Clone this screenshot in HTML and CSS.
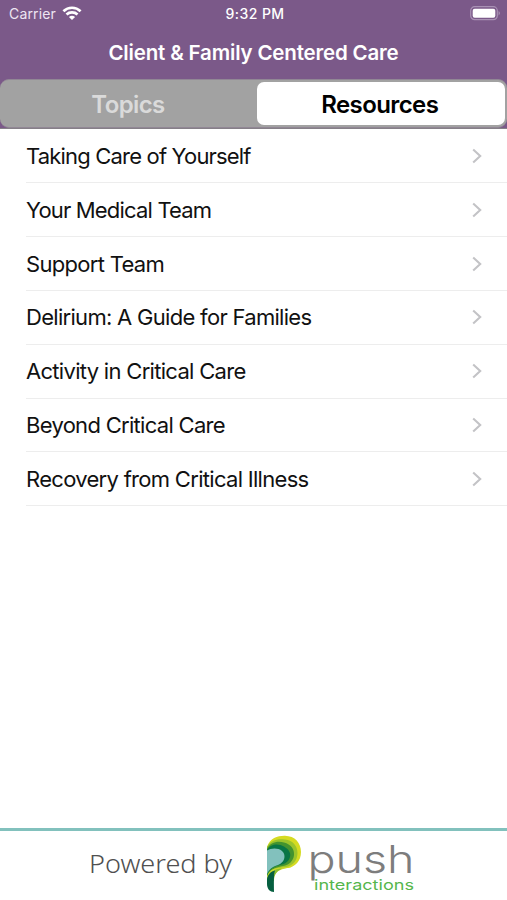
FILE: index.html
```html
<!DOCTYPE html>
<html lang="en">
<head>
<meta charset="utf-8">
<title>Client &amp; Family Centered Care</title>
<link rel="stylesheet" href="styles.css">
</head>
<body>
<div class="app">
  <header class="header">
    <div class="status">
      <div class="carrier"><span class="carrier-name">Carrier</span>
        <svg class="wifi" width="20" height="15" viewBox="0 0 20 15" fill="none" stroke="#fff" stroke-width="2.7"><path d="M1.4 5.2C6.3.6 13.7.6 18.6 5.2M4.5 8.5C7.5 5.7 12.5 5.7 15.5 8.5"/><path d="M10 14 6.9 10.9Q10 8.4 13.1 10.9Z" fill="#fff" stroke="none"/></svg>
      </div>
      <time class="time">9:32 PM</time>
      <svg class="battery" width="31" height="15" viewBox="0 0 31 15"><rect x=".7" y=".7" width="26.6" height="13" rx="4" fill="none" stroke="#a991b4" stroke-width="1.2"/><rect x="2.7" y="2.7" width="22.6" height="9" rx="2" fill="#fff"/><path d="M28.7 5q2 2.2 0 4.4z" fill="#b9a5c3"/></svg>
    </div>
    <h1 class="title">Client &amp; Family Centered Care</h1>
  </header>
  <nav class="tabs-wrap"><div class="tabs">
    <button class="tab"><span class="topics">Topics</span></button>
    <button class="tab active"><span class="resources">Resources</span></button>
  </div></nav>
  <ul class="list">
    <li class="row tight"><span>Taking Care of Yourself</span><svg class="chevron" viewBox="0 0 10 16"><path d="m1.2 1.6 7 6.4-7 6.4"/></svg></li>
    <li class="row tight"><span>Your Medical Team</span><svg class="chevron" viewBox="0 0 10 16"><path d="m1.2 1.6 7 6.4-7 6.4"/></svg></li>
    <li class="row"><span>Support Team</span><svg class="chevron" viewBox="0 0 10 16"><path d="m1.2 1.6 7 6.4-7 6.4"/></svg></li>
    <li class="row"><span>Delirium: A Guide for Families</span><svg class="chevron" viewBox="0 0 10 16"><path d="m1.2 1.6 7 6.4-7 6.4"/></svg></li>
    <li class="row"><span>Activity in Critical Care</span><svg class="chevron" viewBox="0 0 10 16"><path d="m1.2 1.6 7 6.4-7 6.4"/></svg></li>
    <li class="row"><span>Beyond Critical Care</span><svg class="chevron" viewBox="0 0 10 16"><path d="m1.2 1.6 7 6.4-7 6.4"/></svg></li>
    <li class="row"><span>Recovery from Critical Illness</span><svg class="chevron" viewBox="0 0 10 16"><path d="m1.2 1.6 7 6.4-7 6.4"/></svg></li>
  </ul>
  <footer class="footer">
    <svg class="brand" width="507" height="69" viewBox="0 831 507 69">
      <text class="powered" x="89" y="872.5" textLength="143" lengthAdjust="spacingAndGlyphs">Powered by</text>
      <path fill="#d5db22" d="M267 847C270 838 278 835.6 285 835.8C295 836 301 843 301 852C301 861 295 867 288 868C281 869 272 868 267 877Z"/>
      <path fill="#9bc42c" d="M267 847C271 839.5 278 838.5 285 839.5C293 840.5 297.5 846 297.5 853C297.5 861 292 866 286 867C278 868 270 870 267 877Z"/>
      <path fill="#43932f" d="M267 849C270 842 278 840.5 284 842.5C291 844.5 294.5 849 294 855C293.5 861 289 865 283 866C276 867 269 870 267 876Z"/>
      <path fill="#087545" d="M267 850C271 843 279 843.5 284 846.5C289 849.5 291 853 290 857C288.5 863 283 864.5 278 865.5C273 866.5 269 870 267 875Z"/>
      <path fill="#82c1bd" d="M267 850.5C271 848 278 847.5 282 851C287 855.5 284 863 278 865C272 866.5 269 870 267 874Z"/>
      <path fill="#c9d72b" d="M267 878C269 868 276 868 282 867.5L291 867C282 869 276 870 274 877L273 884C268 882 267 881 267 878Z"/>
      <path fill="#8bbd31" d="M267 880C269 871 275 869 282 868.4C277 871 274 874 274 881Z"/>
      <path fill="#065f40" d="M267 879C268 874 271 871.5 275 870.5C273.5 875 274 882 274 892C270 892 267 889 267 884Z"/>
      <text class="push" x="307.5" y="872.5" textLength="107" lengthAdjust="spacingAndGlyphs">push</text>
      <text class="interactions" x="314" y="889.8" textLength="100" lengthAdjust="spacingAndGlyphs">interactions</text>
    </svg>
  </footer>
</div>
</body>
</html>
```

FILE: styles.css
```css
* { box-sizing: border-box; }
body { margin: 0; font-family: Inter, "Liberation Sans", sans-serif; background: #fff; color: #111; }
.app { height: 900px; display: flex; flex-direction: column; overflow: hidden; }
.header { height: 79px; background: #7b5989; color: #fff; }
.status { height: 27px; padding: 0 6px 0 9px; display: grid; grid-template-columns: 1fr auto 1fr; align-items: center; font-size: 14px; }
.carrier { display: flex; align-items: center; gap: 6px; }
.carrier-name { letter-spacing: .15px; color: #eee5f2; }
.time { font-weight: 500; font-size: 14px; letter-spacing: .45px; }
.battery { justify-self: end; }
.title { margin: 0; height: 51px; line-height: 52px; text-align: center; font-size: 20.5px; font-weight: 600; letter-spacing: -.17px; }
.tabs-wrap { height: 50px; background: #7b5989; border-bottom: 1px solid #858087; }
.tabs { height: 49px; padding: 2px; display: grid; grid-template-columns: 252px 1fr; gap: 2.5px; background: #a2a2a2; border-radius: 9px; border-top: 1px solid #918795; border-bottom: 1px solid #918795; }
.tab { border: 0; padding: 2px 0 0; background: none; border-radius: 7px; font: 600 24px Inter, sans-serif; color: #dadada; }
.tab.active { background: #fff; color: #000; padding-right: 2px; }
.topics { letter-spacing: -.6px; }
.resources { letter-spacing: -.6px; }
.list { list-style: none; margin: 0; padding: 0 0 0 26px; flex: 1; }
.row { height: 53.8px; padding: 0 25px 0 0; display: flex; align-items: center; justify-content: space-between; border-bottom: 1.6px solid #ededed; font-size: 22px; letter-spacing: -.7px; }
.row:first-child { height: 54.4px; }
.tight { letter-spacing: -.82px; }
.chevron { width: 10px; height: 16px; fill: none; stroke: #c3c3c6; stroke-width: 2.1; }
.footer { height: 72px; border-top: 3px solid #82c1bd; }
.brand { display: block; }
.powered { font: 300 25.5px "Noto Sans", sans-serif; fill: #505050; }
.push { font: 300 38px Inter, sans-serif; fill: #7d7d7d; }
.interactions { font: 400 14.5px Inter, sans-serif; fill: #55b64c; }
```
